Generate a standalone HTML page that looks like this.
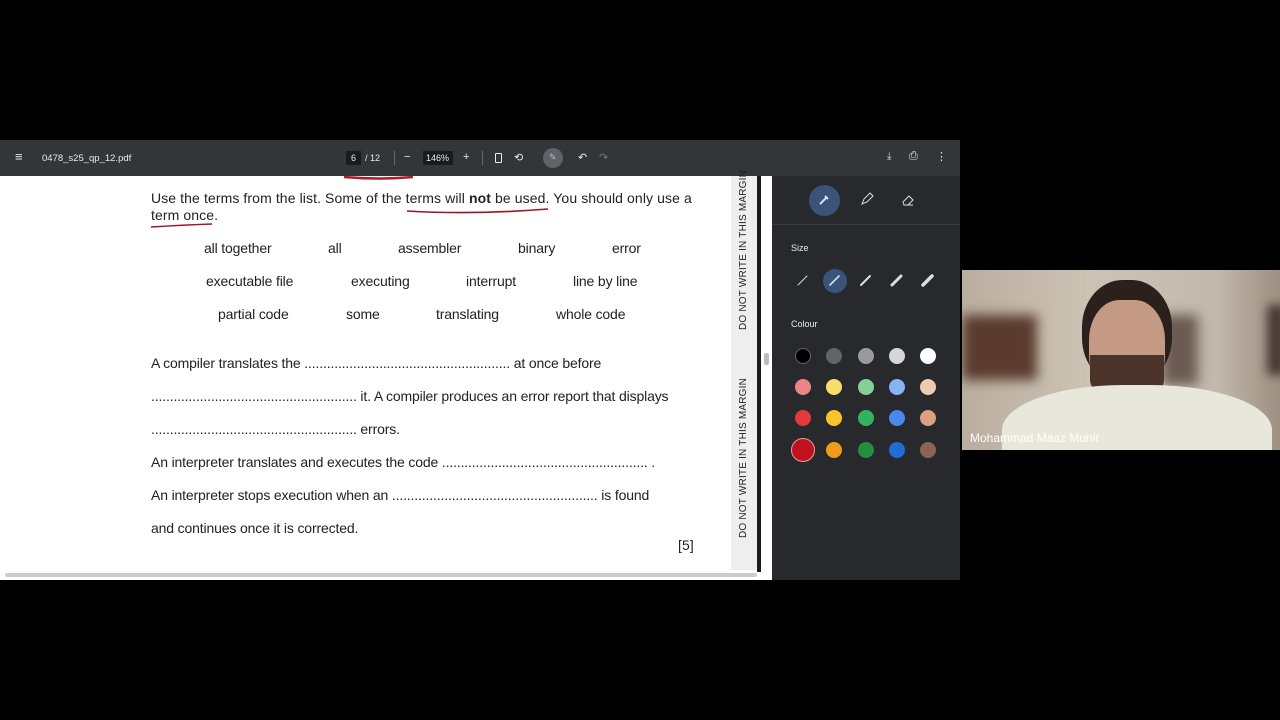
<!DOCTYPE html>
<html><head><meta charset="utf-8"><style>
*{margin:0;padding:0;box-sizing:border-box}
body{width:1280px;height:720px;background:#000;position:relative;overflow:hidden;font-family:"Liberation Sans",Arial,sans-serif}
.abs{position:absolute}
#tb{left:0;top:140px;width:960px;height:36px;background:#323639;color:#e8eaed;font-size:9px}
#doc{left:0;top:176px;width:772px;height:404px;background:#fff}
#page{left:3px;top:176px;width:728px;height:394px;background:#fff;color:#222;font-size:14px;letter-spacing:0.1px}
.t{position:absolute;white-space:nowrap}
.lo{letter-spacing:-0.15px}
#marg{left:731px;top:176px;width:26px;height:394px;background:#eeeeee}
.vt{position:absolute;transform:rotate(-90deg);transform-origin:left top;font-size:10px;color:#222;white-space:nowrap;letter-spacing:.2px}
#panel{left:772px;top:176px;width:188px;height:404px;background:#28292c}
.dot{position:absolute;border-radius:50%;width:16px;height:16px}
.lbl{position:absolute;color:#e8eaed;font-size:9px}
</style></head><body>
<div id="tb" class="abs">
 <div class="t" style="left:15px;top:11px;font-size:13px;line-height:12px">&#8801;</div>
 <div class="t" style="left:42px;top:13px;font-size:9.5px">0478_s25_qp_12.pdf</div>
 <div class="abs" style="left:346px;top:11px;width:15px;height:14px;background:#191b1c"></div>
 <div class="t" style="left:351px;top:13px">6</div>
 <div class="t" style="left:365px;top:13px">/ 12</div>
 <div class="abs" style="left:394px;top:11px;width:1px;height:14px;background:#666"></div>
 <div class="t" style="left:404px;top:11px;font-size:11px">−</div>
 <div class="abs" style="left:423px;top:11px;width:30px;height:14px;background:#191b1c"></div>
 <div class="t" style="left:426px;top:13px">146%</div>
 <div class="t" style="left:463px;top:11px;font-size:11px">+</div>
 <div class="abs" style="left:482px;top:11px;width:1px;height:14px;background:#666"></div>
 <div class="abs" style="left:495px;top:13px;width:7px;height:10px;border:1px solid #e8eaed;border-radius:1px"></div>
 <div class="t" style="left:514px;top:11px;font-size:11px">⟲</div>
 <div class="abs" style="left:543px;top:8px;width:20px;height:20px;border-radius:50%;background:#5f6368"></div>
 <div class="t" style="left:549px;top:12px;font-size:9px;color:#bbb">✎</div>
 <div class="t" style="left:578px;top:11px;font-size:11px">↶</div>
 <div class="t" style="left:599px;top:11px;font-size:11px;color:#777">↷</div>
 <div class="t" style="left:887px;top:11px;font-size:10px">⤓</div>
 <div class="t" style="left:909px;top:10px;font-size:11px">⎙</div>
 <div class="t" style="left:936px;top:10px;font-size:11px">⋮</div>
</div>
<div id="doc" class="abs"></div>
<div id="page" class="abs">
 <svg class="abs" style="left:0;top:0" width="728" height="60"><path d="M341 1 Q375 4 410 1" stroke="#b01c28" stroke-width="2.5" fill="none"/><path d="M404 35 Q470 39 545 33" stroke="#a01424" stroke-width="1.6" fill="none"/><path d="M148 51 Q180 49 209 48" stroke="#a01424" stroke-width="1.6" fill="none"/></svg>
 <div class="t" style="left:148px;top:14px">Use the terms from the list. Some of the terms will <b>not</b> be used. You should only use a</div>
 <div class="t" style="left:148px;top:31px">term once.</div>
 <div class="t lo" style="left:201px;top:64px">all together</div>
 <div class="t lo" style="left:325px;top:64px">all</div>
 <div class="t lo" style="left:395px;top:64px">assembler</div>
 <div class="t lo" style="left:515px;top:64px">binary</div>
 <div class="t lo" style="left:609px;top:64px">error</div>
 <div class="t lo" style="left:203px;top:97px">executable file</div>
 <div class="t lo" style="left:348px;top:97px">executing</div>
 <div class="t lo" style="left:463px;top:97px">interrupt</div>
 <div class="t lo" style="left:570px;top:97px">line by line</div>
 <div class="t lo" style="left:215px;top:130px">partial code</div>
 <div class="t lo" style="left:343px;top:130px">some</div>
 <div class="t lo" style="left:433px;top:130px">translating</div>
 <div class="t lo" style="left:553px;top:130px">whole code</div>
 <div class="t lo" style="left:148px;top:179px">A compiler translates the ....................................................... at once before</div>
 <div class="t lo" style="left:148px;top:212px">....................................................... it. A compiler produces an error report that displays</div>
 <div class="t lo" style="left:148px;top:245px">....................................................... errors.</div>
 <div class="t lo" style="left:148px;top:278px">An interpreter translates and executes the code ....................................................... .</div>
 <div class="t lo" style="left:148px;top:311px">An interpreter stops execution when an ....................................................... is found</div>
 <div class="t lo" style="left:148px;top:344px">and continues once it is corrected.</div>
 <div class="t" style="left:675px;top:361px">[5]</div>
</div>
<div id="marg" class="abs">
 <div class="vt" style="left:7px;top:154px">DO NOT WRITE IN THIS MARGIN</div>
 <div class="vt" style="left:7px;top:362px">DO NOT WRITE IN THIS MARGIN</div>
</div>
<div class="abs" style="left:757px;top:176px;width:4px;height:396px;background:#1a1a1a"></div>
<div class="abs" style="left:764px;top:353px;width:5px;height:12px;background:#bbb;border-radius:2px"></div>
<div class="abs" style="left:5px;top:573px;width:752px;height:4px;background:#ccc;border-radius:2px"></div>
<div id="panel" class="abs">
 <div class="abs" style="left:0;top:48px;width:188px;height:1px;background:#3c3d40"></div>
 <div class="abs" style="left:37px;top:9px;width:31px;height:31px;border-radius:50%;background:#3b5378"></div>
 <svg class="abs" style="left:0;top:0" width="188" height="48"><path d="M48 28 L55 21 M53 20 l3 3" stroke="#cfe0ff" stroke-width="2" fill="none"/><path d="M90 28 l2-5 6-6 3 3-6 6z" stroke="#ddd" stroke-width="1" fill="none"/><path d="M131 26 l6-6 4 4-5 5 h-4z M134 29 h7" stroke="#ddd" stroke-width="1" fill="none"/></svg>
 <div class="lbl" style="left:19px;top:67px">Size</div>
 <div class="abs" style="left:51px;top:93px;width:24px;height:24px;border-radius:50%;background:#3b5378"></div>
 <svg class="abs" style="left:0;top:90" width="188" height="30"><g stroke="#ddd" stroke-linecap="round"><path d="M26 19 L35 10" stroke-width="1"/><path d="M58 19 L67 10" stroke="#cfe0ff" stroke-width="1.6"/><path d="M89 19 L98 10" stroke-width="2"/><path d="M120 19 L129 10" stroke-width="3"/><path d="M151 19 L160 10" stroke-width="3.5"/></g></svg>
 <div class="lbl" style="left:19px;top:143px">Colour</div>
 <div class="dot" style="left:23px;top:172px;background:#000;border:1px solid #666"></div>
 <div class="dot" style="left:54px;top:172px;background:#636466"></div>
 <div class="dot" style="left:86px;top:172px;background:#9a9a9a"></div>
 <div class="dot" style="left:117px;top:172px;background:#d6d6d6"></div>
 <div class="dot" style="left:148px;top:172px;background:#fff"></div>
 <div class="dot" style="left:23px;top:203px;background:#ec8686"></div>
 <div class="dot" style="left:54px;top:203px;background:#f7dd69"></div>
 <div class="dot" style="left:86px;top:203px;background:#83d196"></div>
 <div class="dot" style="left:117px;top:203px;background:#88b2f5"></div>
 <div class="dot" style="left:148px;top:203px;background:#edcdb0"></div>
 <div class="dot" style="left:23px;top:234px;background:#e23b3b"></div>
 <div class="dot" style="left:54px;top:234px;background:#f6c52b"></div>
 <div class="dot" style="left:86px;top:234px;background:#30b45e"></div>
 <div class="dot" style="left:117px;top:234px;background:#4a88ec"></div>
 <div class="dot" style="left:148px;top:234px;background:#dda083"></div>
 <div class="dot" style="left:19px;top:262px;width:24px;height:24px;background:#c0111f;border:1px solid #e8a0a0"></div>
 <div class="dot" style="left:54px;top:266px;background:#ef9c18"></div>
 <div class="dot" style="left:86px;top:266px;background:#21913f"></div>
 <div class="dot" style="left:117px;top:266px;background:#1f6dd6"></div>
 <div class="dot" style="left:148px;top:266px;background:#8c6350"></div>
</div>
<div class="abs" style="left:962px;top:270px;width:318px;height:180px;overflow:hidden;background:linear-gradient(90deg,#b9ada0,#cdc3b5 40%,#c2b8ac 80%,#9d8f82)">
 <div class="abs" style="left:0;top:45px;width:75px;height:65px;background:#5a3b2e;filter:blur(6px)"></div>
 <div class="abs" style="left:200px;top:45px;width:36px;height:70px;background:#6b5a52;filter:blur(6px)"></div>
 <div class="abs" style="left:305px;top:35px;width:20px;height:70px;background:#4a3a34;filter:blur(5px)"></div>
 <div class="abs" style="left:120px;top:10px;width:90px;height:105px;border-radius:45%;background:#2b201c"></div>
 <div class="abs" style="left:127px;top:30px;width:76px;height:100px;border-radius:40% 40% 45% 45%;background:#c59a84"></div>
 <div class="abs" style="left:128px;top:85px;width:74px;height:45px;border-radius:0 0 45% 45%;background:#4a3328"></div>
 <div class="abs" style="left:40px;top:115px;width:270px;height:100px;border-radius:45% 45% 0 0;background:#e8e7dc"></div>
 <div class="t" style="left:8px;top:161px;color:#fff;font-size:12px">Mohammad Maaz Munir</div>
</div>
</body></html>
